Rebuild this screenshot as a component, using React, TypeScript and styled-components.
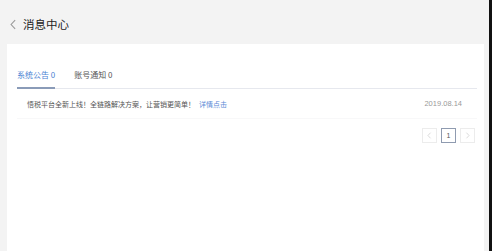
import React from "react";
import styled, { createGlobalStyle } from "styled-components";

const Global = createGlobalStyle`
  html, body { margin: 0; padding: 0; }
  body {
    background: #f2f2f2;
    font-family: "Noto Sans CJK SC", "Noto Sans", sans-serif;
  }
`;

const Screen = styled.div`
  display: flex;
  width: 492px;
  height: 251px;
  overflow: hidden;
`;

const Main = styled.div`
  flex: 1;
  display: flex;
  flex-direction: column;
  background: #f3f3f3;
`;

const Edge = styled.div`
  width: 3px;
  background: #111;
`;

const Header = styled.div`
  height: 44px;
  display: flex;
  align-items: center;
  padding-left: 8px;
  gap: 4px;
  padding-top: 5px;
  box-sizing: border-box;
`;

const Title = styled.span`
  font-size: 11.5px;
  color: #222;
  line-height: 1;
`;

const Card = styled.div`
  flex: 1;
  margin-left: 7px;
  margin-right: 5px;
  background: #fff;
  padding: 23px 7px 0 10px;
  display: flex;
  flex-direction: column;
`;

const Tabs = styled.div`
  display: flex;
  gap: 19px;
  border-bottom: 1px solid #e6e8ee;
`;

const Tab = styled.div<{ $active?: boolean }>`
  font-size: 8px;
  line-height: 1;
  padding: 4px 0 8px;
  color: ${(p) => (p.$active ? "#4a7fd3" : "#555")};
  border-bottom: 2px solid ${(p) => (p.$active ? "#8a9bb8" : "transparent")};
  margin-bottom: -1px;
`;

const Row = styled.div`
  display: flex;
  align-items: center;
  justify-content: space-between;
  height: 29px;
  padding: 0 15px 0 10px;
  border-bottom: 1px solid #f8f8f9;
  font-size: 7px;
  color: #555;
`;

const Link = styled.span`
  color: #5b8ad6;
  margin-left: 4px;
`;

const Date = styled.span`
  color: #999;
  font-family: "Liberation Sans", Arial, sans-serif;
  font-size: 7.5px;
`;

const Pager = styled.div`
  display: flex;
  justify-content: flex-end;
  gap: 4px;
  padding: 9px 2px 0 0;
`;

const PageBtn = styled.div<{ $current?: boolean }>`
  width: 15px;
  height: 15px;
  box-sizing: border-box;
  border: 1px solid ${(p) => (p.$current ? "#8f9bb0" : "#ececec")};
  display: flex;
  align-items: center;
  justify-content: center;
  font-family: "Liberation Sans", Arial, sans-serif;
  font-size: 7px;
  color: ${(p) => (p.$current ? "#555" : "#ccc")};
`;

const Chevron = ({ dir = "left", size = 10, color = "#999" }: { dir?: "left" | "right"; size?: number; color?: string }) => (
  <svg width={size} height={size} viewBox="0 0 10 10">
    <path
      d={dir === "left" ? "M6.5 1 L2.8 5 L6.5 9" : "M3.5 1 L7.2 5 L3.5 9"}
      fill="none"
      stroke={color}
      strokeWidth="1"
    />
  </svg>
);

export default function App() {
  return (
    <Screen>
      <Global />
      <Main>
        <Header>
          <Chevron size={11} color="#9a9a9a" />
          <Title>消息中心</Title>
        </Header>
        <Card>
          <Tabs>
            <Tab $active>系统公告 0</Tab>
            <Tab>账号通知 0</Tab>
          </Tabs>
          <Row>
            <span>
              悟税平台全新上线！全链路解决方案，让营销更简单！
              <Link>详情点击</Link>
            </span>
            <Date>2019.08.14</Date>
          </Row>
          <Pager>
            <PageBtn>
              <Chevron size={7} color="#ccc" />
            </PageBtn>
            <PageBtn $current>1</PageBtn>
            <PageBtn>
              <Chevron dir="right" size={7} color="#ccc" />
            </PageBtn>
          </Pager>
        </Card>
      </Main>
      <Edge />
    </Screen>
  );
}
